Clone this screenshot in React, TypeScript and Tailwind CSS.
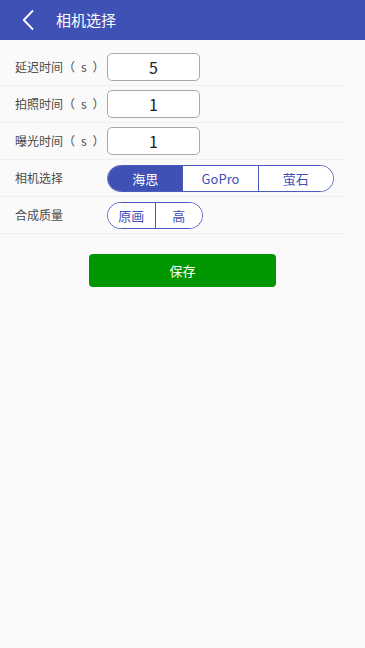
import { useState } from "react";

const font = "font-['Noto_Sans_CJK_SC','Noto_Sans',sans-serif]";

const Segmented = ({
  options,
  value,
  onChange,
  width,
}: {
  options: string[];
  value: number;
  onChange: (i: number) => void;
  width: string;
}) => (
  <div className={`flex h-[27px] ${width} overflow-hidden rounded-full border-[1.5px] border-[#4a5bbb]`}>
    {options.map((o, i) => (
      <button
        key={o}
        onClick={() => onChange(i)}
        className={`flex-1 text-[13px] leading-none ${i > 0 ? "border-l-[1.5px] border-[#4a5bbb]" : ""} ${
          i === value ? "bg-[#3f51b5] text-white" : "bg-white text-[#3f51b5]"
        }`}
      >
        {o}
      </button>
    ))}
  </div>
);

export default function App() {
  const [times, setTimes] = useState({ delay: "5", shoot: "1", expose: "1" });
  const [camera, setCamera] = useState(0);
  const [quality, setQuality] = useState(-1);

  const rowClass = "flex h-[37px] items-center border-b border-[#f1f1f1] pl-[15px] mr-[18px]";
  const labelClass = "w-[92px] text-[12px] text-[#4a4a4a]";
  const inputClass =
    "h-[28px] w-[93px] rounded-[5px] border border-[#a8a8a8] bg-white text-center text-[16px] text-[#222] focus:outline-none";

  const fields: { key: keyof typeof times; label: string }[] = [
    { key: "delay", label: "延迟时间（\u2002s\u2002）" },
    { key: "shoot", label: "拍照时间（\u2002s\u2002）" },
    { key: "expose", label: "曝光时间（\u2002s\u2002）" },
  ];

  return (
    <div className={`min-h-[648px] bg-[#fafafa] ${font}`}>
      {/* Header */}
      <div className="flex h-[40px] items-center bg-[#3f51b5] text-white">
        <button className="ml-[22px] flex h-[24px] w-[14px] items-center">
          <svg width="12" height="20" viewBox="0 0 12 20" fill="none">
            <path d="M10.5 1L1.8 10l8.7 9" stroke="white" strokeWidth="1.8" strokeLinecap="round" strokeLinejoin="round" />
          </svg>
        </button>
        <h1 className="ml-[20px] text-[15px]">相机选择</h1>
      </div>

      <div className="pt-[9px]">
        {fields.map((f) => (
          <div key={f.key} className={rowClass}>
            <span className={`${labelClass} whitespace-nowrap`}>{f.label}</span>
            <input
              value={times[f.key]}
              onChange={(e) => setTimes({ ...times, [f.key]: e.target.value })}
              className={inputClass}
            />
          </div>
        ))}

        <div className={rowClass}>
          <span className={labelClass}>相机选择</span>
          <Segmented options={["海思", "GoPro", "萤石"]} value={camera} onChange={setCamera} width="w-[227px]" />
        </div>

        <div className={rowClass}>
          <span className={labelClass}>合成质量</span>
          <Segmented options={["原画", "高"]} value={quality} onChange={setQuality} width="w-[96px]" />
        </div>
      </div>

      <div className="mt-[20px] flex justify-center">
        <button className="h-[33px] w-[187px] rounded-[4px] bg-[#009600] text-[13px] text-white">保存</button>
      </div>
    </div>
  );
}
